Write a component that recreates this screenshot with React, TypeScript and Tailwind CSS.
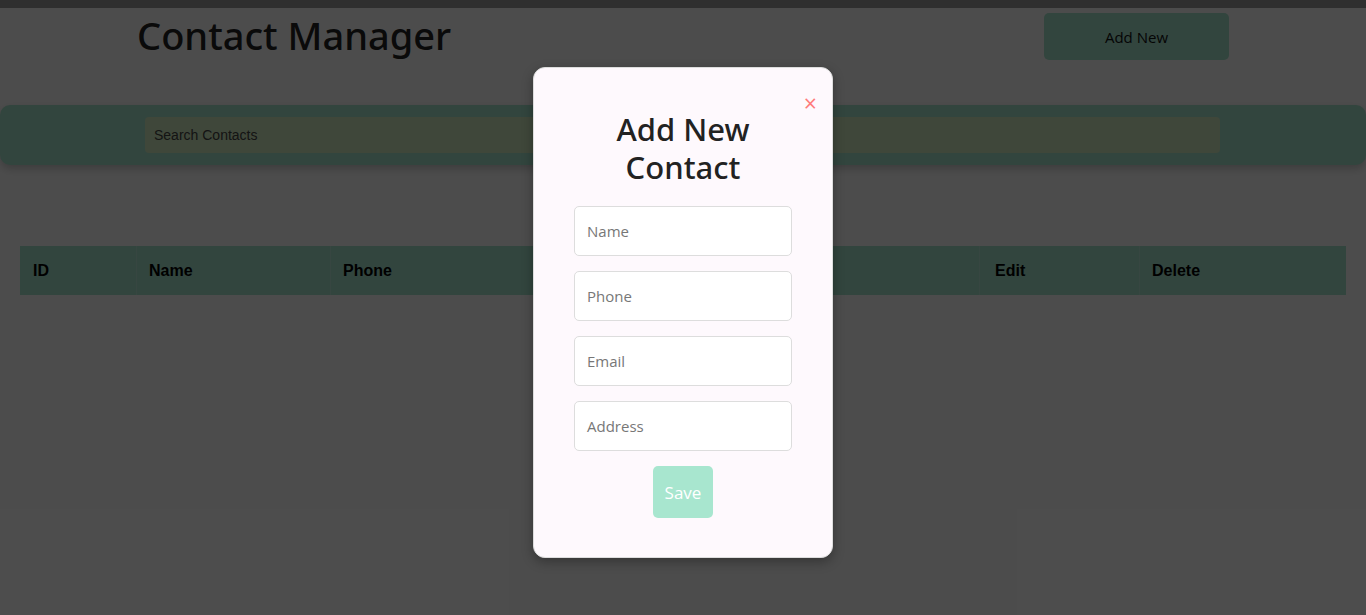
import React from "react";

const seg = { fontFamily: '"Open Sans", "Noto Sans", sans-serif' };
const noto = { fontFamily: '"Noto Sans", sans-serif' };

export default function App() {
  return (
    <div className="relative w-[1366px] h-[615px] overflow-hidden bg-white">
      <div className="h-[8px] bg-[#9d9d9d]" />
      <div className="flex items-start justify-between px-[137px]" style={seg}>
        <h1 className="text-[38px] leading-[54px] font-medium text-[#222] tracking-[0px] mt-[0px]" style={noto}>Contact Manager</h1>
        <button className="mt-[5px] w-[185px] h-[47px] rounded-[5px] bg-[#a8e6cf] text-[15px] text-[#111] pt-[1px]">Add New</button>
      </div>
      <div className="mt-[43px] h-[60px] rounded-[10px] bg-[#a8e6cf] shadow-[0_4px_8px_rgba(0,0,0,0.2)] flex items-center pl-[145px] pr-[146px]">
        <div className="w-full h-[36px] rounded-[4px] bg-[#d4eec2] flex items-center px-[9px] text-[14px] text-[#444]" style={{ fontFamily: '"Liberation Sans", Arial, sans-serif' }}>
          Search Contacts
        </div>
      </div>
      <div className="mt-[81px] mx-[20px]" style={{ fontFamily: '"Liberation Sans", Arial, sans-serif' }}>
        <div className="flex h-[49px] bg-[#a8e6cf] text-[16px] font-bold text-black">
          <div className="w-[117px] pl-[13px] flex items-center border-r border-[#b9ecd9]">ID</div>
          <div className="w-[194px] pl-[12px] flex items-center border-r border-[#b9ecd9]">Name</div>
          <div className="w-[209px] pl-[12px] flex items-center border-r border-[#b9ecd9]">Phone</div>
          <div className="w-[200px] pl-[12px] flex items-center border-r border-[#b9ecd9]">Email</div>
          <div className="w-[240px] pl-[12px] flex items-center border-r border-[#b9ecd9]">Address</div>
          <div className="w-[160px] pl-[15px] flex items-center border-r border-[#b9ecd9]">Edit</div>
          <div className="flex-1 pl-[12px] flex items-center">Delete</div>
        </div>
      </div>

      <div className="absolute inset-0 bg-black/70 flex justify-center">
        <div className="relative mt-[67px] w-[300px] h-[491px] rounded-[12px] bg-[#fef9fd] border border-[#ddd] shadow-[0_4px_12px_rgba(0,0,0,0.3)] flex flex-col items-center" style={seg}>
          <span className="absolute right-[15px] top-[22px] text-[#ff7b7b] text-[23px] leading-[26px]">×</span>
          <h2 className="mt-[42px] text-[31px] leading-[38px] text-center text-[#222] font-medium w-[200px]" style={noto}>Add New Contact</h2>
          <div className="mt-[20px] flex flex-col gap-[15px]">
            {["Name", "Phone", "Email", "Address"].map((p) => (
              <div key={p} className="w-[218px] h-[50px] rounded-[5px] bg-white border border-[#ddd] flex items-center pl-[12px] pt-[1px] text-[15px] text-[#777]">
                {p}
              </div>
            ))}
          </div>
          <button className="mt-[15px] w-[60px] h-[52px] rounded-[5px] bg-[#a8e6cf] text-white text-[17px] pt-[1px]">Save</button>
        </div>
      </div>
    </div>
  );
}
